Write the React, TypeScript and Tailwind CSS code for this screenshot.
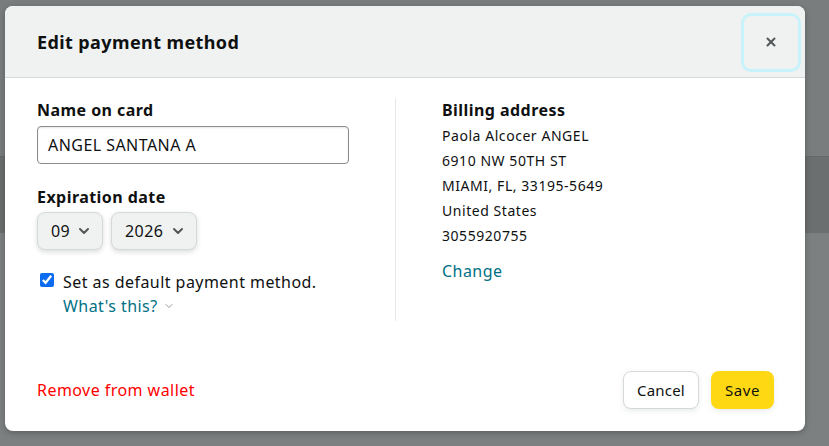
import React from 'react'
import { ChevronDown, X } from 'lucide-react'

const address = [
    'Paola Alcocer ANGEL',
    '6910 NW 50TH ST',
    'MIAMI, FL, 33195-5649',
    'United States',
    '3055920755',
]

const Select = ({ value, width }: { value: string; width: string }) => (
    <div
        className={`${width} h-[38px] flex items-center justify-between pl-[13px] pr-[10px] bg-[#f0f2f2] border border-[#d5d9d9] rounded-lg shadow-[0_2px_5px_rgba(15,17,17,0.15)] text-[16px] text-[#0f1111]`}
    >
        <span>{value}</span>
        <ChevronDown className="w-4 h-4 text-[#555]" strokeWidth={3} />
    </div>
)

export default function App() {
    return (
        <div
            className="relative w-[829px] h-[446px] overflow-hidden bg-[#747777]"
            style={{ fontFamily: '"Noto Sans", "Open Sans", sans-serif' }}
        >
            {/* page behind the overlay */}
            <div className="flex flex-col h-full">
                <div className="h-[157px] border-b border-[#666969] bg-[#7a7d7d]" />
                <div className="h-[76px] bg-[#6c6f6f]" />
                <div className="flex-1 bg-[#7d8080]" />
            </div>

            {/* modal */}
            <div className="absolute left-[5px] top-[6px] w-[800px] h-[425px] bg-white rounded-lg shadow-[0_2px_6px_rgba(0,0,0,0.25)] flex flex-col overflow-hidden text-[#0f1111] tracking-[0.45px]">
                <div className="h-[72px] shrink-0 bg-[#f0f2f2] border-b border-[#d5d9d9] flex items-center justify-between pl-8 pr-[4px]">
                    <h2 className="text-[18px] font-bold leading-none tracking-[0.4px]">Edit payment method</h2>
                    <button className="w-[60px] h-[59px] rounded-[10px] border-[3px] border-[#c9f3fb] flex items-center justify-center text-[#565959] mt-[1px]">
                        <X className="w-[14px] h-[14px]" strokeWidth={3.5} />
                    </button>
                </div>

                <div className="flex-1 flex flex-col pl-8 pr-[31px] pt-[20px] pb-[22px]">
                    <div className="flex">
                        <div className="w-[359px] pr-[47px] border-r border-[#e7e7e7] h-[223px]">
                            <div className="text-[16px] font-bold leading-6">Name on card</div>
                            <div className="mt-[4px] w-[312px] h-[38px] border border-[#888c8c] rounded-[4px] flex items-center px-[10px] text-[16px] shadow-[inset_0_1px_2px_rgba(15,17,17,0.1)]">
                                ANGEL SANTANA A
                            </div>
                            <div className="mt-[21px] text-[16px] font-bold leading-6">Expiration date</div>
                            <div className="mt-[3px] flex gap-2">
                                <Select value="09" width="w-[66px]" />
                                <Select value="2026" width="w-[86px]" />
                            </div>
                            <div className="mt-[20px] flex items-start gap-[9px] pl-[3px]">
                                <input type="checkbox" defaultChecked className="mt-[3px] w-[14px] h-[14px] accent-[#0b6cf0]" />
                                <div className="text-[16px] leading-6 text-[#0f1111]">
                                    <div>Set as default payment method.</div>
                                    <div className="flex items-center gap-[5px] text-[#007185]">
                                        What's this?
                                        <ChevronDown className="w-[12px] h-[12px] text-[#999]" strokeWidth={2} />
                                    </div>
                                </div>
                            </div>
                        </div>
                        <div className="pl-[46px]">
                            <div className="text-[16px] font-bold leading-6">Billing address</div>
                            <div className="mt-[1px] text-[14px] leading-[25px] tracking-[0.55px]">
                                {address.map(l => (
                                    <div key={l}>{l}</div>
                                ))}
                            </div>
                            <div className="mt-[11px] text-[16px] text-[#007185] leading-6">Change</div>
                        </div>
                    </div>

                    <div className="mt-auto flex items-center justify-between">
                        <span className="text-[16px] text-[#ff0000]">Remove from wallet</span>
                        <div className="flex gap-3">
                            <button className="w-[76px] h-[38px] rounded-lg border border-[#d5d9d9] bg-white shadow-[0_2px_5px_rgba(213,217,217,0.5)] text-[15px] tracking-[0.2px]">
                                Cancel
                            </button>
                            <button className="w-[63px] h-[38px] rounded-lg bg-[#ffd814] shadow-[0_2px_5px_rgba(213,217,217,0.5)] text-[15px] tracking-[0.6px]">
                                Save
                            </button>
                        </div>
                    </div>
                </div>
            </div>
        </div>
    )
}
